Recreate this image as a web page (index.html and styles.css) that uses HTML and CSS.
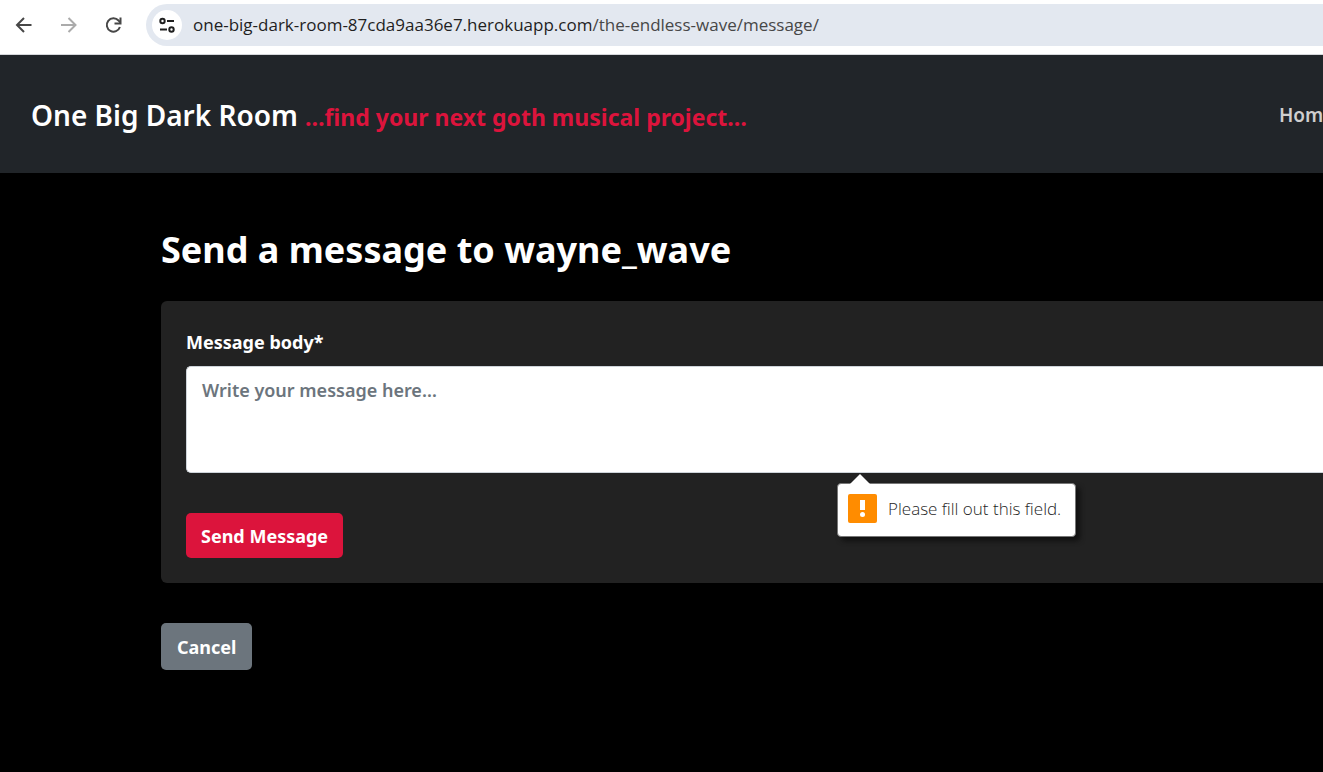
FILE: index.html
```html
<!DOCTYPE html>
<html lang="en">
<head>
<meta charset="utf-8">
<title>One Big Dark Room</title>
<link rel="stylesheet" href="styles.css">
</head>
<body>
<div class="toolbar">
  <button class="tool" type="button" aria-label="Back"><svg width="24" height="24" viewBox="0 0 24 24"><path d="M20.500 12H6M13 5L6 12L13 19"/></svg></button>
  <button class="tool tool-off" type="button" aria-label="Forward" disabled><svg width="24" height="24" viewBox="0 0 24 24"><path d="M5 12H19.500M12.500 5L19.500 12L12.500 19"/></svg></button>
  <button class="tool" type="button" aria-label="Reload"><svg width="24" height="24" viewBox="0 0 24 24"><path d="M18.900 14A6.700 6.700 0 1 1 17.500 7.500L19.100 9.500"/><path d="M19.500 4.500V10.500H13.500"/></svg></button>
  <div class="address">
    <button class="site-info" type="button" aria-label="Site information"><svg width="20" height="20" viewBox="0 0 20 20"><circle cx="5.500" cy="6" r="2.200"/><path d="M10 6H17M3 14.500H10"/><circle cx="14.500" cy="14.500" r="2.200"/></svg></button>
    <a class="url" href="#">one-big-dark-room-87cda9aa36e7.herokuapp.com<span class="path">/the-endless-wave/message/</span></a>
  </div>
</div>
<header class="header">
  <div class="heading">
    <a class="brand" href="#">One Big Dark Room</a>
    <span class="tagline">…find your next goth musical project…</span>
  </div>
  <nav class="nav"><a href="#">Home</a></nav>
</header>
<main class="main">
  <h1 class="title">Send a message to wayne_wave</h1>
  <form class="card">
    <label class="label" for="message">Message body*</label>
    <div class="field">
      <textarea class="message" id="message" placeholder="Write your message here…" required></textarea>
      <div class="hint" role="alert">
        <svg class="hint-arrow" width="22" height="11" viewBox="0 0 22 11"><path d="M0 11L11 0L22 11Z" fill="#fff"/></svg>
        <svg width="29" height="29" viewBox="0 0 29 29"><rect width="29" height="29" rx="2" fill="#ff8c00"/><path d="M12 6H17V16H12Z" fill="#fff"/><circle cx="14.500" cy="20.500" r="2.500" fill="#fff"/></svg>
        <span>Please fill out this field.</span>
      </div>
    </div>
    <button class="button send" type="button">Send Message</button>
  </form>
  <a class="button cancel" href="#">Cancel</a>
</main>
</body>
</html>
```
FILE: styles.css
```css
* { box-sizing: border-box; }
body {
  margin: 0;
  min-height: 100vh;
  overflow-x: hidden;
  background: #000;
  color: #fff;
  font: 600 18px/28px "Noto Sans", "Open Sans", sans-serif;
}
a { color: inherit; text-decoration: none; }
button { border: 0; font: inherit; color: inherit; cursor: pointer; }
.toolbar {
  display: flex;
  align-items: center;
  gap: 21px;
  padding: 4px 0 8px 11px;
  background: #fff;
  border-bottom: 1px solid #d5d7db;
}
.tool { width: 24px; height: 24px; padding: 0; background: none; color: #474747; }
.tool-off { color: #ababab; }
.tool svg, .site-info svg { display: block; fill: none; stroke: currentColor; stroke-width: 2; }
.address {
  flex: 1;
  display: flex;
  align-items: center;
  gap: 11px;
  height: 42px;
  padding-left: 6px;
  background: #e3e8f0;
  border-radius: 21px 0 0 21px;
}
.site-info {
  display: grid;
  place-items: center;
  width: 30px;
  height: 30px;
  padding: 0;
  border-radius: 50%;
  background: #fff;
  color: #1f1f1f;
}
.url { color: #1f1f1f; font: 400 17px/24px "Open Sans", "Noto Sans", sans-serif; white-space: nowrap; }
.path { color: #474747; }
.header {
  display: flex;
  align-items: center;
  justify-content: space-between;
  padding: 40px 0 38px 31px;
  background: #212529;
  white-space: nowrap;
}
.heading { display: flex; align-items: baseline; gap: 7px; }
.brand { font-size: 28px; line-height: 40px; }
.tagline { color: #dc143c; font-size: 23px; font-weight: 700; }
.nav { width: 44px; color: #cfcfcf; font-size: 19px; }
.main { padding: 50px 0 40px 161px; }
.title { margin: 0 0 24px; font-size: 36px; line-height: 54px; font-weight: 700; }
.card {
  margin-bottom: 40px;
  padding: 25px 0 25px 25px;
  background: #222;
  border-radius: 6px 0 0 6px;
}
.label { display: block; margin: 2px 0 10px; font-weight: 700; }
.field { position: relative; margin-bottom: 40px; }
.message {
  display: block;
  width: 100%;
  height: 107px;
  padding: 9px 15px;
  border: 1px solid #ced4da;
  border-right: 0;
  border-radius: 5px 0 0 5px;
  background: #fff;
  color: #212529;
  font: inherit;
  resize: none;
  outline: 0;
}
.message::placeholder { color: #6c757d; opacity: 1; }
.hint {
  position: absolute;
  top: 117px;
  left: 651px;
  display: flex;
  align-items: center;
  gap: 11px;
  height: 54px;
  padding: 0 14px 3px 10px;
  border: 1px solid #777;
  border-radius: 4px;
  background: #fff;
  color: #1f1f1f;
  box-shadow: 4px 4px 5px #111;
  font: 300 17px/24px "Open Sans", "Noto Sans", sans-serif;
  white-space: nowrap;
}
.hint-arrow { position: absolute; top: -10px; left: 11px; }
.button { display: inline-block; border-radius: 5px; font-weight: 700; }
.send { display: block; padding: 9px 15px 8px; background: #dc143c; }
.cancel { padding: 10px 16px 9px; background: #6c757d; }
```
